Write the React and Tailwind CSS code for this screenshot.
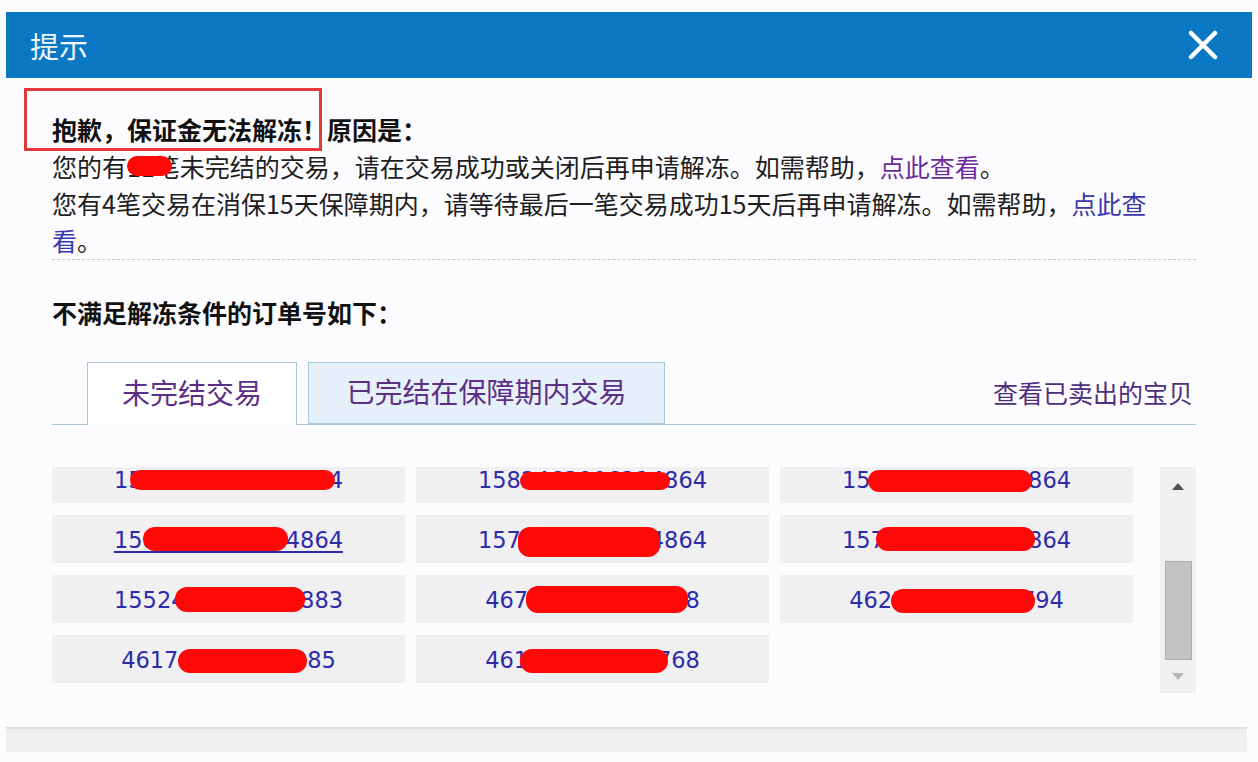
import React from "react";

const cjk = { fontFamily: '"Noto Sans CJK SC", "Noto Sans", sans-serif' };

// order numbers, blob = [left, top, width, height] relative to the cell
const orders = [
  { no: "1582403054184864", blob: [78, 15, 205, 20] },
  { no: "1582463906214864", blob: [104, 17, 150, 18] },
  { no: "1584790036314864", blob: [88, 15, 164, 22] },
  { no: "1580256303654864", blob: [91, 12, 145, 24], underline: true },
  { no: "1579843602914864", blob: [102, 12, 142, 30] },
  { no: "1578582025174864", blob: [96, 12, 159, 24] },
  { no: "1552498310277883", blob: [123, 12, 130, 25] },
  { no: "467614695021608", blob: [110, 11, 162, 27] },
  { no: "462380361427794", blob: [111, 14, 144, 24] },
  { no: "461703518286985", blob: [126, 14, 129, 24] },
  { no: "461405298712768", blob: [104, 14, 148, 24] },
];

function OrderCell({ o }) {
  return (
    <div className="relative h-[48px] bg-[#f0f0f3] flex items-center justify-center pt-[3px]">
      <span
        className={
          "text-[22.5px] text-[#2c2ca8] " +
          (o.underline ? "underline decoration-[2px] underline-offset-[3px]" : "")
        }
        style={{ fontFamily: '"DejaVu Sans", Verdana, sans-serif' }}
      >
        {o.no}
      </span>
      <span
        className="absolute rounded-[12px] bg-[#ff0808]"
        style={{ left: o.blob[0], top: o.blob[1], width: o.blob[2], height: o.blob[3] }}
      />
    </div>
  );
}

export default function App() {
  return (
    <div className="relative w-[1258px] h-[762px] bg-[#fcfcfe] pt-[12px] text-[#1e1e1e]" style={cjk}>
      {/* Header */}
      <div className="mx-[6px] h-[66px] bg-[#0b78c3] flex items-center justify-between pl-[24px] pr-[34px]">
        <span className="text-[29px] text-white/95 leading-none">提示</span>
        <svg width="30" height="30" viewBox="0 0 30 30">
          <path d="M3 3 L27 27 M27 3 L3 27" stroke="#fff" strokeWidth="4.5" strokeLinecap="round" />
        </svg>
      </div>

      {/* Red highlight box */}
      <div className="absolute left-[24px] top-[88px] w-[298px] h-[63px] border-[3px] border-[#e23a3a]" />

      {/* Body */}
      <div className="pl-[52px] pr-[62px]">
        <div className="pt-[33px] text-[25px] leading-[37px] border-b border-dashed border-[#c9c9c9]">
          <div className="font-bold text-[#111]">抱歉，保证金无法解冻！原因是：</div>
          <div>
            您的有
            <span className="relative">
              11笔
              <span className="absolute left-0 top-[8px] w-[45px] h-[20px] rounded-[10px] bg-[#ff0808]" />
            </span>
            未完结的交易，请在交易成功或关闭后再申请解冻。如需帮助，
            <span className="text-[#6a2c9a]">点此查看</span>。
          </div>
          <div>
            您有4笔交易在消保15天保障期内，请等待最后一笔交易成功15天后再申请解冻。如需帮助，
            <span className="text-[#3a36b0]">点此查</span>
            <br />
            <span className="text-[#3a36b0]">看</span>。
          </div>
        </div>

        <div className="mt-[34px] text-[25px] leading-[37px] font-bold text-[#111]">不满足解冻条件的订单号如下：</div>

        {/* Tabs */}
        <div className="mt-[31px] h-[63px] flex items-end pl-[35px] border-b border-[#a9c8da]">
          <div className="-mb-px h-[63px] w-[210px] bg-white border border-b-0 border-[#a9c8da] flex items-center justify-center pb-[4px] text-[28px] text-[#5c2f86]">
            未完结交易
          </div>
          <div className="ml-[11px] h-[62px] w-[357px] bg-[#e6f0fa] border border-[#a9c8da] flex items-center justify-center pb-[4px] text-[28px] text-[#5c2f86]">
            已完结在保障期内交易
          </div>
          <div className="ml-auto self-start mt-[12px] mr-[3px] text-[25px] text-[#4e2f7e]">查看已卖出的宝贝</div>
        </div>

        {/* Orders list */}
        <div className="mt-[42px] flex gap-[27px]">
          <div className="w-[1081px] h-[226px] overflow-hidden">
            <div className="-mt-[12px] grid grid-cols-3 gap-x-[11px] gap-y-[12px]">
              {orders.map((o) => (
                <OrderCell key={o.no} o={o} />
              ))}
            </div>
          </div>
          <div className="w-[36px] h-[226px] bg-[#f0f0f2] flex flex-col items-center">
            <svg width="14" height="10" viewBox="0 0 14 10" className="mt-[15px]">
              <path d="M7 1 L13 8 L1 8 Z" fill="#505050" />
            </svg>
            <div className="mt-[69px] w-[27px] h-[99px] bg-[#c3c3c3] border border-[#acacac]" />
            <svg width="14" height="10" viewBox="0 0 14 10" className="mt-[11px]">
              <path d="M1 2 L13 2 L7 9 Z" fill="#b8b8b8" />
            </svg>
          </div>
        </div>
      </div>

      {/* Footer */}
      <div className="mt-[34px] ml-[6px] mr-[11px] h-[25px] bg-[#efeff1] border-t-2 border-[#dedee0]" />
    </div>
  );
}
